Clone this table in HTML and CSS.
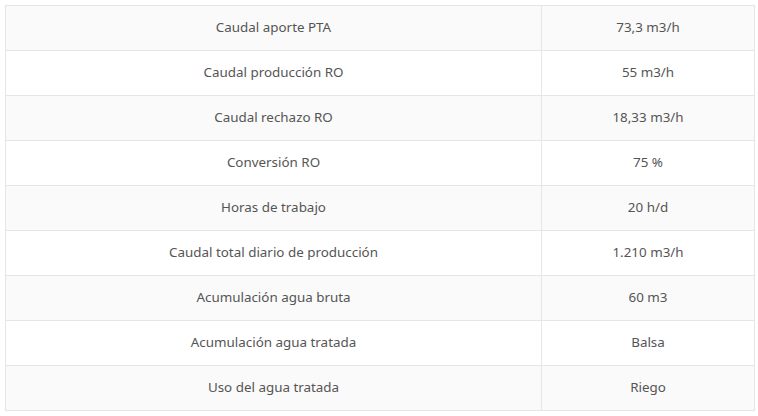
FILE: index.html
```html
<!DOCTYPE html>
<html lang="es">
<head>
<meta charset="utf-8">
<title>Datos</title>
<link rel="stylesheet" href="styles.css">
</head>
<body>
<table class="data-table">
  <colgroup><col class="col-label"><col class="col-value"></colgroup>
  <tbody>
    <tr><td>Caudal aporte PTA</td><td>73,3 m3/h</td></tr>
    <tr><td>Caudal producción RO</td><td>55 m3/h</td></tr>
    <tr><td>Caudal rechazo RO</td><td>18,33 m3/h</td></tr>
    <tr><td>Conversión RO</td><td>75 %</td></tr>
    <tr><td>Horas de trabajo</td><td>20 h/d</td></tr>
    <tr><td>Caudal total diario de producción</td><td>1.210 m3/h</td></tr>
    <tr><td>Acumulación agua bruta</td><td>60 m3</td></tr>
    <tr><td>Acumulación agua tratada</td><td>Balsa</td></tr>
    <tr><td>Uso del agua tratada</td><td>Riego</td></tr>
  </tbody>
</table>
</body>
</html>
```

FILE: styles.css
```css
html, body {
  margin: 0;
  background: #ffffff;
}
body {
  padding: 5px;
  font-family: "Noto Sans", "Open Sans", sans-serif;
  font-size: 13.4px;
  color: #555555;
}
.data-table {
  border-collapse: collapse;
  width: 749px;
  table-layout: fixed;
}
.col-label { width: 536px; }
.col-value { width: 213px; }
.data-table td {
  border: 1px solid #e6e6e6;
  padding: 0 8px 2px;
  text-align: center;
  vertical-align: middle;
  box-sizing: border-box;
  height: 45px;
}
.data-table tr:nth-child(odd) td {
  background: #fafafa;
}
```
